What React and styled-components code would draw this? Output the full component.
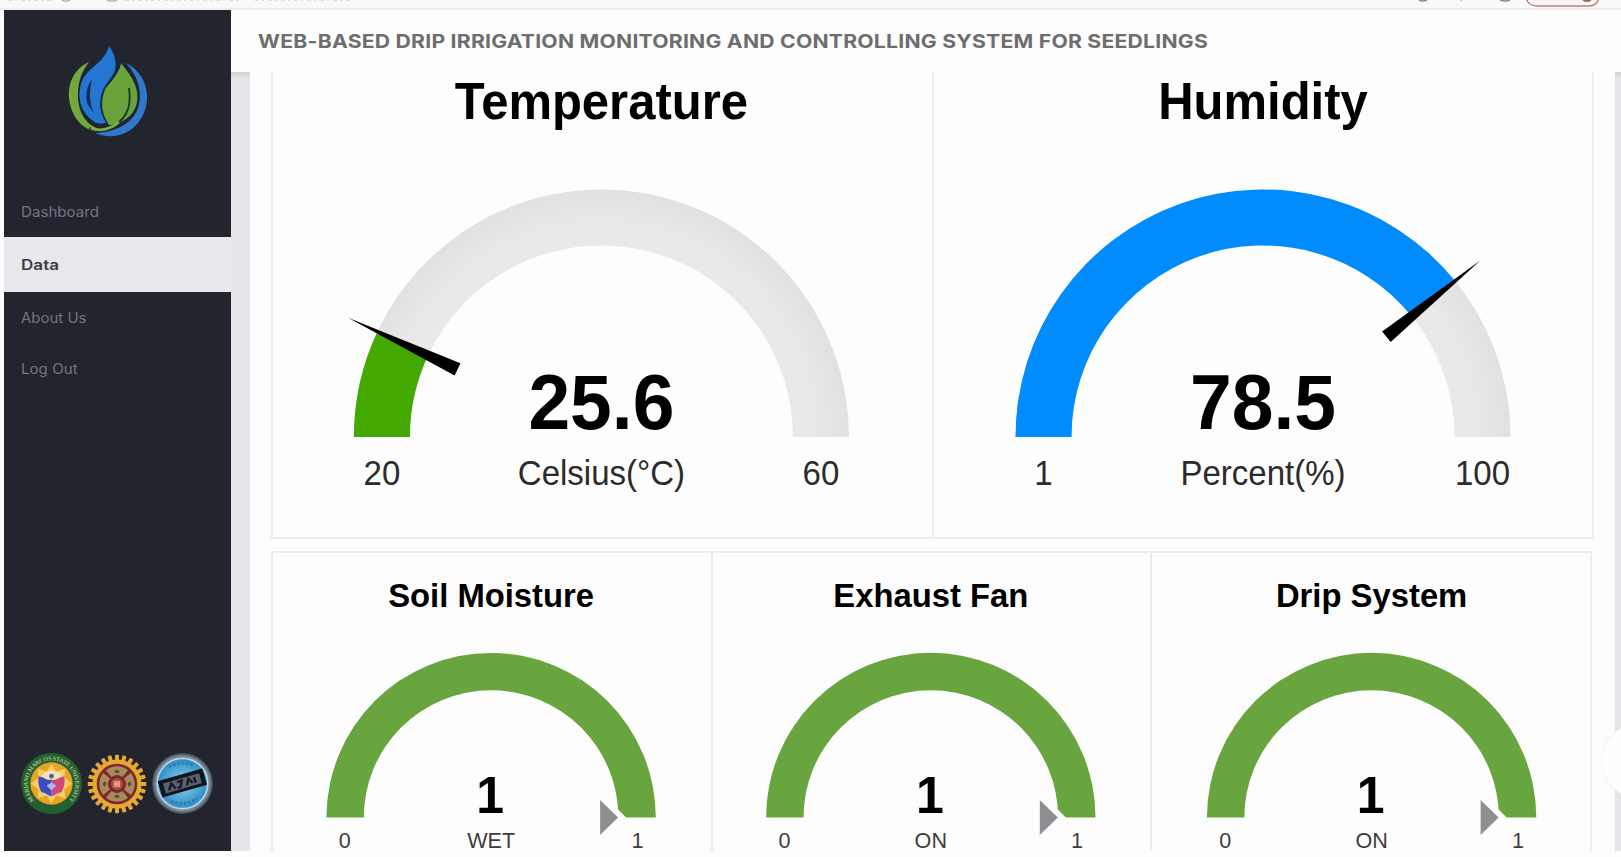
import React from "react";
import styled, { createGlobalStyle } from "styled-components";

const GlobalStyle = createGlobalStyle`
  * { box-sizing: border-box; }
  html, body { margin: 0; padding: 0; background: #fdfdfd; overflow: hidden; }
`;

const Page = styled.div`
  display: flex;
  flex-direction: column;
  width: 1621px;
  height: 857px;
  background: #fdfdfd;
  font-family: "Liberation Sans", Arial, sans-serif;
`;

const BrowserStrip = styled.div`
  display: flex;
  justify-content: space-between;
  flex: none;
  height: 10px;
  background: #f9f9f9;
  border-bottom: 2px solid #eeeeee;
  overflow: hidden;
`;

const Shell = styled.div`
  display: flex;
  height: 841px;
  padding-left: 3.5px;
`;

const Sidebar = styled.aside`
  display: flex;
  flex-direction: column;
  flex: none;
  width: 227.5px;
  height: 841px;
  background: #22242e;
`;

const Brand = styled.div`
  height: 176px;
  padding: 34px 0 0 62.5px;
`;

const NavItem = styled.a`
  display: flex;
  align-items: center;
  height: ${(p) => (p.$active ? 55 : 51)}px;
  padding-left: 17px;
  font: ${(p) => (p.$active ? 600 : 400)} 14px "Inter", sans-serif;
  color: ${(p) => (p.$active ? "#3a3b42" : "#737581")};
  background: ${(p) => (p.$active ? "#e7e7ec" : "transparent")};
`;

const NavLabel = styled.span`
  transform: scaleX(${(p) => p.$stretch});
  transform-origin: left;
`;

const Partners = styled.div`
  display: flex;
  align-items: center;
  gap: 4px;
  margin-top: auto;
  padding: 0 0 36px 16px;
`;

const Main = styled.main`
  display: flex;
  flex-direction: column;
  flex: 1;
  min-width: 0;
`;

const Header = styled.header`
  flex: none;
  height: 62px;
  padding: 20px 0 0 27px;
  background: #fdfdfd;
`;

const HeaderTitle = styled.h1`
  width: max-content;
  margin: 0;
  font: 650 19px/24px "Inter", sans-serif;
  letter-spacing: 0.2px;
  white-space: nowrap;
  color: #6d6e6d;
  transform: scaleX(1.115);
  transform-origin: left;
`;

const Content = styled.div`
  flex: 1;
  padding: 0 6px 0 19px;
  background: linear-gradient(#d2d2d6, #e6e6ea 7px);
`;

const Panel = styled.div`
  display: flex;
  flex-direction: column;
  gap: 12px;
  height: 779px;
  padding-left: 21px;
  background: #fdfdfd;
`;

const LargeRow = styled.section`
  display: flex;
  width: 1323px;
  height: 467px;
  border: 2px solid #ededef;
  border-top: 0;
`;

const SmallRow = styled.section`
  display: flex;
  width: 1321px;
  height: 300px;
  border: 2px solid #ededef;
  border-bottom: 0;
`;

const Card = styled.article`
  flex: 1 1 0;
  min-width: 0;
  & + & { border-left: 2px solid #ebebed; }
  svg { display: block; margin: 0 auto; overflow: visible; }
`;

const ChatBubble = styled.div`
  position: absolute;
  left: 1602px;
  top: 723px;
  width: 76px;
  height: 76px;
  border-radius: 50%;
  background: #fefefe;
  box-shadow: 0 0 3px rgba(0, 0, 0, 0.08);
`;

const Clip = styled.div`
  position: relative;
  width: 1621px;
  height: 857px;
  overflow: hidden;
`;

const point = (cx, cy, r, t) => [cx - r * Math.cos(Math.PI * t), cy - r * Math.sin(Math.PI * t)];

function arc(cx, cy, R, r, from, to) {
  const [a, b] = point(cx, cy, R, from);
  const [c, d] = point(cx, cy, R, to);
  const [e, f] = point(cx, cy, r, to);
  const [g, h] = point(cx, cy, r, from);
  return `M${a} ${b}A${R} ${R} 0 0 1 ${c} ${d}L${e} ${f}A${r} ${r} 0 0 0 ${g} ${h}Z`;
}

const Label = ({ x, y, children, ...rest }) => (
  <text transform={`translate(${x} ${y}) scale(1 1.04)`} {...rest}>{children}</text>
);

function LargeGauge({ id, title, value, unit, min, max, color, dx = 0 }) {
  const t = (value - min) / (max - min);
  const cx = 320 + dx;
  const cy = 365;
  return (
    <svg width="640" height="463" viewBox="0 0 640 463" textAnchor="middle">
      <defs>
        <radialGradient id={id} gradientUnits="userSpaceOnUse" cx={cx} cy={cy} r="248">
          <stop offset="0.84" stopColor="#e9e9e9" />
          <stop offset="1" stopColor="#e1e1e1" />
        </radialGradient>
      </defs>
      <Label x={cx} y="46.5" fontSize="49" fontWeight="700">{title}</Label>
      <path d={arc(cx, cy, 247.5, 191.5, 0, 1)} fill={`url(#${id})`} />
      <path d={arc(cx, cy, 247.5, 191.5, 0, t)} fill={color} />
      <path d="M-280 0L-159 -6.8V6.8Z" transform={`translate(${cx} ${cy}) rotate(${t * 180})`} />
      <Label x={cx} y="357" fontSize="75" fontWeight="700">{value}</Label>
      <g fontSize="33" fill="#2b2b2b">
        <Label x={cx - 219.5} y="412.5">{min}</Label>
        <Label x={cx} y="412.5">{unit}</Label>
        <Label x={cx + 219.5} y="412.5">{max}</Label>
      </g>
    </svg>
  );
}

function SmallGauge({ title, label, dx = 0 }) {
  const cx = 219 + dx;
  const cy = 264.5;
  return (
    <svg width="438" height="298" viewBox="0 0 438 298" textAnchor="middle">
      <Label x={cx} y="53.5" fontSize="32.8" fontWeight="700">{title}</Label>
      <path d={arc(cx, cy, 164.7, 127.3, 0, 1)} fill="#69a53f" />
      <path d={`M${cx + 125} ${cy - 10}L${cx + 137} ${cy + 2}H${cx + 125}Z`} fill="#fdfdfd" />
      <path d={`M${cx + 109} ${cy - 17.5}L${cx + 127} ${cy}L${cx + 109} ${cy + 17.5}Z`} fill="#8e8e93" />
      <Label x={cx - 1} y="259.5" fontSize="50" fontWeight="700">1</Label>
      <g fontSize="21.6" fill="#3d3d3d">
        <Label x={cx - 146.3} y="295.2">0</Label>
        <Label x={cx} y="295.2">{label}</Label>
        <Label x={cx + 146.3} y="295.2">1</Label>
      </g>
    </svg>
  );
}

const DropLogo = () => (
  <svg width="84" height="96" viewBox="66 44 84 96">
    <path d="M89 62C73 69 66 86 70 104C74 122 88 134 104 131C86 126 78 113 78 95C78 81 82 71 89 62Z" fill="#72a83c" />
    <path d="M126 63C144 72 151 92 145 110C138 131 117 142 95 133C116 132 132 124 138 108C143 92 138 76 126 63Z" fill="#2f78cb" />
    <path d="M121 62C130 73 139 85 138 99C137 113 127 123 109 126C101 116 99 101 105 88C112 80 119 72 121 62Z" fill="#68a43b" stroke="#12283c" strokeWidth="1.2" />
    <path d="M109 45C115 53 118 63 115 72C111 81 101 88 101 101C100 110 103 117 107 123C102 125 98 124 95 123C84 116 78 105 79 92C80 76 89 70 97 63C103 58 106 53 109 45Z" fill="#2575d2" stroke="#12283c" strokeWidth="1.2" />
    <path d="M92 79C86 87 85 98 88 105L94 113C88 101 90 89 92 79Z" fill="#142b55" />
    <path d="M129 88C132 108 126 121 108 129C100 132 94 131 89 128" fill="none" stroke="#17352a" strokeWidth="1.8" />
    <path d="M91 128C100 132 111 129 119 122" fill="none" stroke="#83ad45" strokeWidth="2.6" />
  </svg>
);

const UniversitySeal = () => (
  <svg width="63" height="63" viewBox="0 0 64 64">
    <defs><path id="seal-ring" d="M14.5 49A24 24 0 1 1 49.5 49" /></defs>
    <circle cx="32" cy="32" r="31" fill="#23602f" />
    <text fontSize="6.3" fontWeight="700" fill="#a9bb8c" fontFamily="Liberation Serif, serif">
      <textPath href="#seal-ring" textLength="111">MARIANO MARCOS STATE UNIVERSITY</textPath>
    </text>
    <circle cx="32" cy="32" r="21.5" fill="#e7a323" />
    <path d="M32 12L37 20L46 17L45 26L53 32L45 38L46 47L37 44L32 52L27 44L18 47L19 38L11 32L19 26L18 17L27 20Z" fill="#f6ce68" />
    <circle cx="32" cy="32" r="13" fill="#f5e3b5" />
    <path d="M19 25C23 24 27 30 32 28V45C29 45 27 42 22 41C19 37 18 30 19 25Z" fill="#3d4bc4" />
    <path d="M45 25C41 24 37 30 32 28V45C35 45 37 42 42 41C45 37 46 30 45 25Z" fill="#d04a78" />
    <path d="M27 34L32 31L37 34L32 39Z" fill="#a9b3ec" />
    <circle cx="32" cy="24.5" r="2.5" fill="#4267a8" />
  </svg>
);

const GearSeal = () => (
  <svg width="60" height="60" viewBox="-30 -30 60 60">
    {Array.from({ length: 24 }, (_, i) => (
      <rect key={i} x="-2" y="-29.3" width="4" height="8" rx="0.8" fill="#e5a92f" transform={`rotate(${i * 15})`} />
    ))}
    <circle r="24.5" fill="#e5a92f" />
    <circle r="20.3" fill="#7e2929" />
    {[0, 90, 180, 270].map((a) => (
      <g key={a} transform={`rotate(${a})`}>
        <path d="M-11 -13.8A17.6 17.6 0 0 1 11 -13.8L5.5 -7A9 9 0 0 0 -5.5 -7Z" fill="#a78b5f" />
        <path d="M-3 -12.5L0 -14.5L3 -12L0 -10.5Z" fill="#5f4a2e" />
      </g>
    ))}
    <circle r="6" fill="#b04a3c" />
    <rect x="-3.2" y="-3.2" width="6.4" height="6.4" fill="#d99b80" />
  </svg>
);

const CollegeSeal = () => (
  <svg width="63" height="63" viewBox="-32 -32 64 64">
    <defs>
      <radialGradient id="steel"><stop offset="0.75" stopColor="#c3d4df" /><stop offset="0.9" stopColor="#75828f" /><stop offset="1" stopColor="#3b434f" /></radialGradient>
      <radialGradient id="sky"><stop offset="0" stopColor="#8fd0ec" /><stop offset="1" stopColor="#2c8ec5" /></radialGradient>
    </defs>
    <circle r="31" fill="url(#steel)" />
    <circle r="25.5" fill="url(#sky)" stroke="#b5d8e8" strokeWidth="1.5" />
    <path d="M-14 -17Q0 -24 12 -18M-12 18Q2 24 15 15" stroke="#2f7da8" strokeWidth="3" strokeDasharray="3 1.5" fill="none" />
    <g transform="rotate(-16)">
      <rect x="-23" y="-8.5" width="46" height="16" fill="#12151f" stroke="#090b12" />
      <rect x="-19" y="-5.5" width="38" height="10.5" fill="#59616e" />
      <path d="M-15 3L-11 -3L-8 3M-5 -3H0L-3 3H-6M4 3L7 -3L10 2M13 -3V3" stroke="#151923" strokeWidth="2.4" fill="none" />
    </g>
  </svg>
);

const AddressRemnants = () => (
  <svg width="400" height="8" viewBox="0 0 400 8">
    <path d="M62 0Q66 2.4 70 0M107 0Q112 2.4 117 0" stroke="#a5a5a5" strokeWidth="1.2" fill="none" />
    <path d="M8 0H52M125 0H240M255 0H352" stroke="#c4c4c4" strokeWidth="1" strokeDasharray="4 3 2 4" />
  </svg>
);

const ToolbarRemnants = () => (
  <svg width="261" height="8" viewBox="0 0 261 8">
    <path d="M59 0Q63 2 67 0M140 0Q145 2 150 0" stroke="#888" strokeWidth="1.5" fill="none" />
    <path d="M100 0H102M188 0H190" stroke="#aaa" />
    <path d="M165 -8C166 3 170 6 178 6H228C236 6 239 2 240 -8" fill="#fbf5f5" stroke="#b98080" strokeWidth="1.4" />
    <circle cx="227" cy="-5" r="7" fill="#85696a" />
  </svg>
);

export default function App() {
  return (
    <Clip>
      <GlobalStyle />
      <Page>
        <BrowserStrip>
          <AddressRemnants />
          <ToolbarRemnants />
        </BrowserStrip>
        <Shell>
          <Sidebar>
            <Brand><DropLogo /></Brand>
            <NavItem><NavLabel $stretch={1.08}>Dashboard</NavLabel></NavItem>
            <NavItem $active><NavLabel $stretch={1.22}>Data</NavLabel></NavItem>
            <NavItem><NavLabel $stretch={1.07}>About Us</NavLabel></NavItem>
            <NavItem><NavLabel $stretch={1.08}>Log Out</NavLabel></NavItem>
            <Partners>
              <UniversitySeal />
              <GearSeal />
              <CollegeSeal />
            </Partners>
          </Sidebar>
          <Main>
            <Header>
              <HeaderTitle>WEB-BASED DRIP IRRIGATION MONITORING AND CONTROLLING SYSTEM FOR SEEDLINGS</HeaderTitle>
            </Header>
            <Content>
              <Panel>
                <LargeRow>
                  <Card>
                    <LargeGauge id="temp" title="Temperature" value={25.6} unit="Celsius(°C)" min={20} max={60} color="#43a800" dx={-0.6} />
                  </Card>
                  <Card>
                    <LargeGauge id="hum" title="Humidity" value={78.5} unit="Percent(%)" min={1} max={100} color="#008cfd" />
                  </Card>
                </LargeRow>
                <SmallRow>
                  <Card><SmallGauge title="Soil Moisture" label="WET" dx={-0.9} /></Card>
                  <Card><SmallGauge title="Exhaust Fan" label="ON" dx={-1.2} /></Card>
                  <Card><SmallGauge title="Drip System" label="ON" dx={0.6} /></Card>
                </SmallRow>
              </Panel>
            </Content>
          </Main>
        </Shell>
      </Page>
      <ChatBubble />
    </Clip>
  );
}
